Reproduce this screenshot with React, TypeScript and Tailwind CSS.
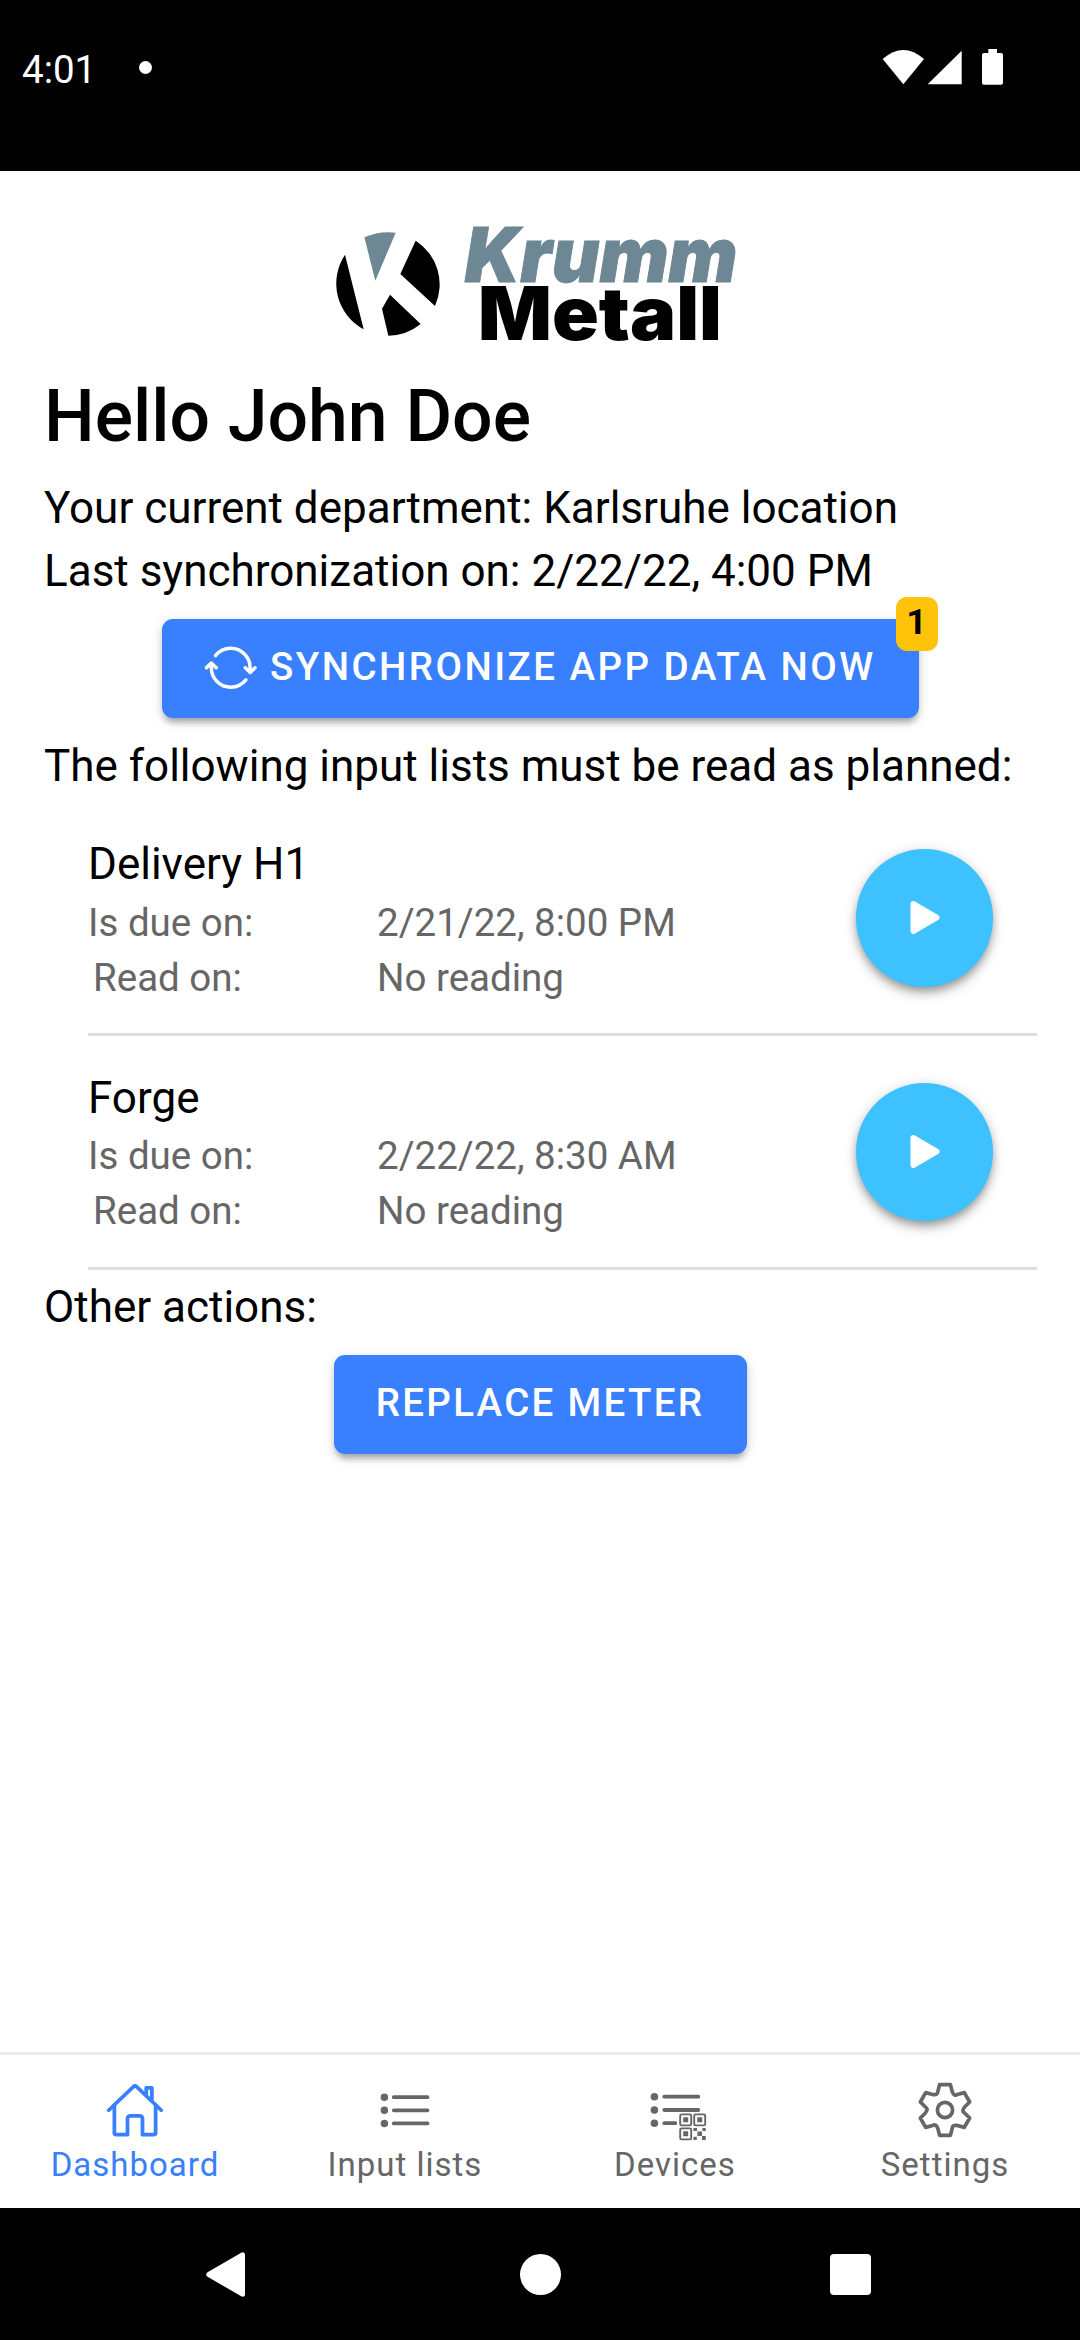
import { IoHomeOutline, IoSyncOutline, IoListOutline } from "react-icons/io5";

const TOOTH: [number, number][] = [
  [-7.2, -18.4],
  [-5.4, -25.4],
  [5.4, -25.4],
  [7.2, -18.4],
];

function gearPath() {
  const pt = ([x, y]: [number, number], k: number) => {
    const a = (k * Math.PI) / 3;
    return `${(x * Math.cos(a) - y * Math.sin(a)).toFixed(2)} ${(x * Math.sin(a) + y * Math.cos(a)).toFixed(2)}`;
  };
  let d = `M${pt(TOOTH[0], 0)}`;
  for (let k = 0; k < 6; k++) {
    d += `L${pt(TOOTH[1], k)}L${pt(TOOTH[2], k)}L${pt(TOOTH[3], k)}`;
    d += `Q${pt([9.2, -13.4], k)} ${pt(TOOTH[0], k + 1)}`;
  }
  return d + "Z";
}

function GearIcon() {
  return (
    <svg width="60" height="60" viewBox="-30 -30 60 60" className="overflow-visible" fill="none" stroke="currentColor" strokeWidth="3.7" strokeLinejoin="round">
      <path d={gearPath()} />
      <circle r="7.6" />
    </svg>
  );
}

function DevicesIcon() {
  return (
    <svg width="60" height="60" viewBox="645 2080 60 60" className="overflow-visible" fill="none" stroke="currentColor" strokeLinecap="round">
      <g strokeWidth="3.8">
        <path d="M664.3 2096.7h34M664.3 2110h34M664.3 2123.2h11" />
      </g>
      <g fill="currentColor" stroke="none">
        <circle cx="654.4" cy="2096.7" r="3.8" />
        <circle cx="654.4" cy="2110" r="3.8" />
        <circle cx="654.4" cy="2123.2" r="3.8" />
        <path d="M683.2 2117.3h5v5h-5zM697.2 2117.3h5v5h-5zM683.2 2131.3h5v5h-5z" />
        <path d="M693.4 2128h3.6v3h-3.6zM702.4 2128h3.4v3h-3.4zM697.4 2131.4h4.6v4.6h-4.6zM693.4 2136.8h3.4v3.2h-3.4zM702 2136h3.8v4h-3.8z" />
      </g>
      <g strokeWidth="1.9">
        <rect x="680.2" y="2114.4" width="11" height="11" rx="1.4" />
        <rect x="694.2" y="2114.4" width="11" height="11" rx="1.4" />
        <rect x="680.2" y="2128.4" width="11" height="11" rx="1.4" />
      </g>
    </svg>
  );
}

function Logo() {
  return (
    <svg width="430" height="150" viewBox="0 0 1290 450" className="block overflow-visible">
      <path fill="#6d8894" d="M133 82Q178 62 227 68L166 212Z" />
      <path d="M75 134L131 358A156 156 0 0 1 75 134ZM287 92A156 156 0 0 1 345 288L241 192ZM210 254L302 342A156 156 0 0 1 205 377L186 296Z" />
      <text x="434" y="215" fill="#6d8894" stroke="#6d8894" strokeWidth="3" fontFamily="Inter" fontWeight="900" fontStyle="italic" fontSize="226" textLength="818" lengthAdjust="spacingAndGlyphs">Krumm</text>
      <text x="474" y="390" fontFamily="Inter" fontWeight="900" fontSize="222" textLength="732" lengthAdjust="spacingAndGlyphs">Metall</text>
    </svg>
  );
}

function Item({ name, due }: { name: string; due: string }) {
  return (
    <div className="ml-[88px] mr-[43px] flex h-[233.75px] items-start justify-between border-b-[3px] border-[#dedede] pr-11">
      <div className="pt-[32px]">
        <div className="text-[44px] leading-[60px]">{name}</div>
        <div className="mt-[0.5px] grid grid-cols-[289px_auto] text-[38.5px] leading-[55px] text-[#666]">
          <span>Is due on:</span>
          <span>{due}</span>
          <span className="pl-[5px]">Read on:</span>
          <span>No reading</span>
        </div>
      </div>
      <button className="mt-[47px] flex h-[138px] w-[137px] items-center justify-center rounded-full bg-[#3dc2ff] shadow-[0_8px_14px_-3px_rgba(0,0,0,.28),0_4px_6px_rgba(0,0,0,.14),0_1px_14px_rgba(0,0,0,.12)]">
        <svg width="30" height="36" viewBox="0 0 30 36" fill="#fff" stroke="#fff" strokeWidth="6" strokeLinejoin="round">
          <path d="M3.5 4L26.5 17.5L3.5 31Z" />
        </svg>
      </button>
    </div>
  );
}

const BUTTON =
  "flex h-[99px] items-center justify-center rounded-[11px] bg-[#3880ff] text-[38.5px] font-medium text-white shadow-[0_8px_6px_-5px_rgba(0,0,0,.2),0_5px_6px_rgba(0,0,0,.14),0_3px_14px_rgba(0,0,0,.12)]";

const TABS = [
  { label: "Dashboard", icon: <IoHomeOutline size={60.5} />, color: "text-[#3880ff]" },
  { label: "Input lists", icon: <IoListOutline size={60.5} />, color: "text-[#666]" },
  { label: "Devices", icon: <DevicesIcon />, color: "text-[#666]" },
  { label: "Settings", icon: <GearIcon />, color: "text-[#666]" },
];

export default function App() {
  return (
    <div className="flex h-[2340px] w-[1080px] flex-col overflow-hidden bg-white font-[Roboto,sans-serif] text-black">
      <header className="flex h-[171px] items-start justify-between bg-black pl-[22px] pr-[74px] text-white">
        <div className="flex items-center pt-[45px]">
          <span className="text-[38.5px] leading-[50px]">4:01</span>
          <span className="ml-[43px] mb-[5px] size-[13px] rounded-full bg-white" />
        </div>
        <svg width="124" height="40" viewBox="0 0 372 120" className="mt-[48px]" fill="#fff">
          <path d="M2 33Q64 -21 126 33L64 109Z" />
          <path d="M137 109H239V8Z" />
          <path d="M319 3H345V15H357Q363 15 363 21V104Q363 110 357 110H306Q300 110 300 104V21Q300 15 306 15H319Z" />
        </svg>
      </header>

      <main className="flex-1">
        <div className="ml-[320px] mt-[39px]">
          <Logo />
        </div>
        <div className="px-11 pt-[14px]">
          <h1 className="text-[71.5px] font-medium leading-[86px]">Hello John Doe</h1>
          <p className="mt-[17px] text-[44px] leading-[63px]">Your current department: Karlsruhe location</p>
          <p className="text-[44px] leading-[63px]">Last synchronization on: 2/22/22, 4:00 PM</p>
        </div>
        <div className="relative mx-auto mt-[16px] w-[757px]">
          <button className={`${BUTTON} w-full pb-[3px] pr-[1px] tracking-[2.45px]`}>
            <IoSyncOutline size={55.5} className="mr-[11px] mt-[2px]" />
            SYNCHRONIZE APP DATA NOW
          </button>
          <span className="absolute -right-[19px] -top-[22px] flex h-[54px] w-[42px] items-center justify-center rounded-[11px] bg-[#ffc409] pb-[2px] text-[35.75px] font-bold leading-none">
            1
          </span>
        </div>
        <p className="mt-[17px] px-11 text-[44px] leading-[63px]">The following input lists must be read as planned:</p>
        <div className="mt-[4px]">
          <Item name="Delivery H1" due="2/21/22, 8:00 PM" />
          <Item name="Forge" due="2/22/22, 8:30 AM" />
        </div>
        <p className="mt-[6px] px-11 text-[44px] leading-[63px]">Other actions:</p>
        <button className={`${BUTTON} mx-auto mt-[16px] w-[413px] pb-[3px] tracking-[2.31px]`}>REPLACE METER</button>
      </main>

      <nav className="grid h-[156px] grid-cols-4 border-t-[3px] border-[#ebebeb]">
        {TABS.map((t) => (
          <div key={t.label} className={`flex flex-col items-center pt-[25px] ${t.color}`}>
            <div className="flex size-[60px] items-center justify-center">{t.icon}</div>
            <span className="mt-[5px] text-[33px] leading-[40px] tracking-[1px]">{t.label}</span>
          </div>
        ))}
      </nav>

      <footer className="flex h-[132px] items-start bg-black pl-[206px] pt-[44px]">
        <svg width="39" height="45" viewBox="0 0 39 45" fill="#fff" stroke="#fff" strokeWidth="5" strokeLinejoin="round">
          <path d="M2.8 22.5L36.5 2.8V42.2Z" />
        </svg>
        <span className="ml-[275px] mt-[2px] size-[41px] rounded-full bg-white" />
        <span className="ml-[269px] mt-[2px] size-[41px] rounded-[4px] bg-white" />
      </footer>
    </div>
  );
}
